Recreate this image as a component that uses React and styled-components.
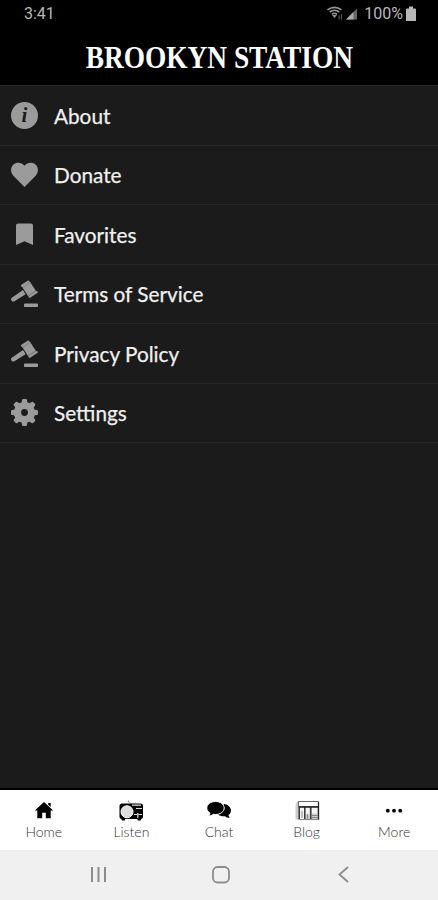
import React from 'react'
import styled, { createGlobalStyle } from 'styled-components'

const GlobalStyle = createGlobalStyle`
  * {
    box-sizing: border-box;
  }
  body {
    margin: 0;
    background: #1b1b1b;
    font-family: Lato, sans-serif;
  }
`

const Screen = styled.div`
  display: flex;
  flex-direction: column;
  height: 900px;
  background-color: #1b1b1b;
`

const StatusBar = styled.div`
  display: flex;
  align-items: center;
  justify-content: space-between;
  height: 28px;
  padding: 0 22px 0 24px;
  background-color: #000;
  color: #b8b8b8;
  font: 16px/28px Roboto, sans-serif;
`

const StatusIcons = styled.div`
  display: flex;
  align-items: center;
  svg {
    display: block;
  }
`

const Battery = styled.span`
  margin: 0 3px 0 5px;
`

const Header = styled.header`
  display: flex;
  align-items: center;
  justify-content: center;
  height: 57px;
  background-color: #000;
`

const Title = styled.h1`
  margin: 0;
  color: #fff;
  font: bold 32px/60px 'Liberation Serif', serif;
  white-space: nowrap;
  transform: scaleX(0.855);
`

const Menu = styled.nav`
  flex: 1;
  border-top: 1px solid #2a2a2a;
`

const MenuRow = styled.div`
  display: flex;
  align-items: center;
  height: 59.5px;
  padding-left: 11px;
  border-bottom: 1px solid #262626;
  color: #f0f0f0;
  font-size: 21px;
  -webkit-text-stroke: 0.25px #f0f0f0;
  svg {
    display: block;
    width: 27px;
    height: 27px;
    margin-right: 16px;
    color: #9b9b9b;
    fill: currentColor;
    -webkit-text-stroke: 0;
  }
`

const Label = styled.span`
  line-height: 24px;
  padding-top: 1px;
  transform: scaleX(0.988);
  transform-origin: left;
`

const TabBar = styled.footer`
  display: flex;
  height: 62px;
  border-top: 2px solid #000;
  background-color: #fff;
`

const TabItem = styled.div`
  flex: 1;
  display: flex;
  flex-direction: column;
  align-items: center;
  padding-top: 9px;
  color: #333;
  font-size: 14px;
  font-weight: 300;
  line-height: 18px;
  svg {
    display: block;
    width: 26px;
    height: 24px;
    color: #000;
  }
`

const SystemBar = styled.div`
  display: flex;
  align-items: center;
  justify-content: space-between;
  height: 50px;
  padding: 0 81px 0 85px;
  background-color: #f0f0f0;
`

const InfoIcon = () => (
  <svg viewBox="0 0 27 27">
    <circle cx="13.5" cy="13.5" r="13.5" />
    <text x="13.5" y="20" textAnchor="middle" fill="#1b1b1b" fontFamily="Liberation Serif, serif" fontSize="21" fontStyle="italic" fontWeight="bold">i</text>
  </svg>
)

const HeartIcon = () => (
  <svg viewBox="0 0 27 27">
    <path d="M13.5 26 2.300 14.700C-.7 11.500-.6 6.500 2.300 3.800c3.400-3.200 8.400-2.400 11.200 1 2.800-3.400 7.800-4.200 11.200-1 2.900 2.700 3 7.700 0 10.900Z" />
  </svg>
)

const BookmarkIcon = () => (
  <svg viewBox="0 0 27 27">
    <path d="M7 2.500h13a2 2 0 0 1 2 2V24l-8.500-3.700L5 24V4.500a2 2 0 0 1 2-2Z" />
  </svg>
)

const GavelIcon = () => (
  <svg viewBox="0 0 27 27">
    <path d="m12 10 2.600 4.300L3 21.400C1 22.500-1.200 19.100.8 17.800Z" />
    <path d="m10.900 6.400 7.900-5 6.300 9.800-7.900 5Z" />
    <path d="m11 5.600 6.200-4M18.500 16.700l7.200-4.600" fill="none" stroke="currentColor" strokeWidth="2.200" strokeLinecap="round" />
    <path d="m12 7.400 6.800-4.300M17.600 15.200l6.800-4.300" fill="none" stroke="#6c6c6c" strokeWidth=".5" />
    <rect x="13" y="23.500" width="14" height="3.500" rx=".8" />
  </svg>
)

const GearIcon = () => (
  <svg viewBox="0 0 27 27">
    <circle cx="13.5" cy="13.5" r="7" fill="none" stroke="currentColor" strokeWidth="7.200" />
    {[0, 45, 90, 135, 180, 225, 270, 315].map(angle => (
      <path key={angle} d="M10.500 4.500 11 1q.2-1 1.200-1h2.600q1 0 1.200 1l.5 3.500Z" transform={`rotate(${angle} 13.5 13.5)`} />
    ))}
  </svg>
)

const HomeIcon = () => (
  <svg viewBox="0 0 26 24" fill="currentColor">
    <path d="m13 3 9.200 8.500h-2.500v7.700h-4.900v-5.500h-3.600v5.500H6.300v-7.700H3.800L13 3Zm4.200 1h2.500v4l-2.500-2.200Z" />
  </svg>
)

const RadioIcon = () => (
  <svg viewBox="0 0 26 24">
    <path d="m10 3 6 2 2-1.500" fill="none" stroke="#bbb" strokeWidth=".8" />
    <circle cx="10.500" cy="2.200" r=".8" fill="#777" />
    <rect x="1.500" y="4.500" width="23.500" height="15.500" rx="2.500" fill="currentColor" />
    <path d="M3 19.500h4v2H4zM19.500 19.500h4l-1 2h-3z" fill="currentColor" />
    <circle cx="9" cy="12.800" r="6" fill="#ddd" stroke="#fff" />
    <path d="M14 6.200h9M18 9.500h6M16 15.500h3M20.500 15.500h3.500M19.800 14v5" fill="none" stroke="#ddd" strokeWidth="1.200" />
  </svg>
)

const ChatIcon = () => (
  <svg viewBox="0 0 26 24" fill="currentColor">
    <path d="M18 5c4 .6 7 3.200 7 6.500 0 1.800-1 3.400-2.600 4.600.2 1 .7 1.900 1.400 2.700-2.200 0-3.700-.7-4.800-1.600-2.800.3-5.400-.4-7.100-2Z" />
    <path d="M9.500 2.500c4.900 0 8.700 2.900 8.700 6.500s-3.800 6.500-8.700 6.500c-.8 0-1.600-.1-2.300-.2-1.300 1.200-2.800 1.800-4.600 1.800.8-.8 1.300-1.900 1.300-3.100C1.900 12.800.8 11 .8 9c0-3.600 3.800-6.500 8.700-6.500Z" stroke="#fff" strokeWidth="1" />
  </svg>
)

const NewsIcon = () => (
  <svg viewBox="0 0 26 24">
    <path d="M3.500 2h21v18.500H1.500V6l2-4Z" fill="#ccc" />
    <path d="M4.500 2.500h20v5h-20z" fill="#fff" stroke="#666" />
    <path d="M6 8.500h4v12H6zM11.500 8.500h4v7h-4zM17.500 8.500H23v6h-5.500z" fill="#f4f4f4" />
    <path d="M4.500 8h20M5.200 8v12.500M10.800 8v12.500M16.800 8v12.500M24.500 3v18" fill="none" stroke="#222" strokeWidth="1.300" />
    <path d="M8 12v7M13.500 15v5M18 16.500h6M18 18.500h6M6 20.500h18.500" fill="none" stroke="#888" />
  </svg>
)

const MoreIcon = () => (
  <svg viewBox="0 0 26 24" fill="currentColor">
    <circle cx="6.800" cy="11.700" r="1.900" />
    <circle cx="13" cy="11.700" r="1.900" />
    <circle cx="19.200" cy="11.700" r="1.900" />
  </svg>
)

const menu = [
  { label: 'About', Icon: InfoIcon },
  { label: 'Donate', Icon: HeartIcon },
  { label: 'Favorites', Icon: BookmarkIcon },
  { label: 'Terms of Service', Icon: GavelIcon },
  { label: 'Privacy Policy', Icon: GavelIcon },
  { label: 'Settings', Icon: GearIcon }
]

const tabs = [
  { label: 'Home', Icon: HomeIcon },
  { label: 'Listen', Icon: RadioIcon },
  { label: 'Chat', Icon: ChatIcon },
  { label: 'Blog', Icon: NewsIcon },
  { label: 'More', Icon: MoreIcon }
]

const App = () => (
  <Screen>
    <GlobalStyle />
    <StatusBar>
      <span>3:41</span>
      <StatusIcons>
        <svg width="34" height="16" viewBox="0 0 34 16">
          <path d="M2.500 3.800Q9.500-1 16.500 3.800M4.700 6Q9.500 2.500 14.300 6M6.900 8.300Q9.500 6.300 12.100 8.300" fill="none" stroke="#999" strokeWidth="1.600" />
          <path d="m7.200 9 2.300 3 2.300-3Z" fill="#999" />
          <path d="M14 13.500V9.500M16.500 8v5.500" stroke="#555" strokeWidth="1.200" />
          <path d="M21 13.500 32 2.500v11Z" fill="#666" />
          <path d="M21 13.500 28.500 6v7.500Z" fill="#aaa" />
        </svg>
        <Battery>100%</Battery>
        <svg width="10" height="16" viewBox="0 0 10 16" fill="#b8b8b8">
          <path d="M3 .5h4v2h2.200l.8.800V15H0V3.300l.8-.8H3Z" />
        </svg>
      </StatusIcons>
    </StatusBar>
    <Header>
      <Title>BROOKYN STATION</Title>
    </Header>
    <Menu>
      {menu.map(({ label, Icon }) => (
        <MenuRow key={label}>
          <Icon />
          <Label>{label}</Label>
        </MenuRow>
      ))}
    </Menu>
    <TabBar>
      {tabs.map(({ label, Icon }) => (
        <TabItem key={label}>
          <Icon />
          {label}
        </TabItem>
      ))}
    </TabBar>
    <SystemBar>
      <svg width="26" height="20" viewBox="0 0 26 20" fill="none" stroke="#8c8c8c" strokeWidth="2">
        <path d="M7 2v15M13.500 2v15M20 2v15" />
      </svg>
      <svg width="20" height="20" viewBox="0 0 20 20" fill="none" stroke="#8c8c8c" strokeWidth="1.800">
        <rect x="2" y="2" width="16" height="15.500" rx="4.500" />
      </svg>
      <svg width="26" height="20" viewBox="0 0 26 20" fill="none" stroke="#8c8c8c" strokeWidth="1.800">
        <path d="M17 2 8.500 9.500 17 17" />
      </svg>
    </SystemBar>
  </Screen>
)

export default App
